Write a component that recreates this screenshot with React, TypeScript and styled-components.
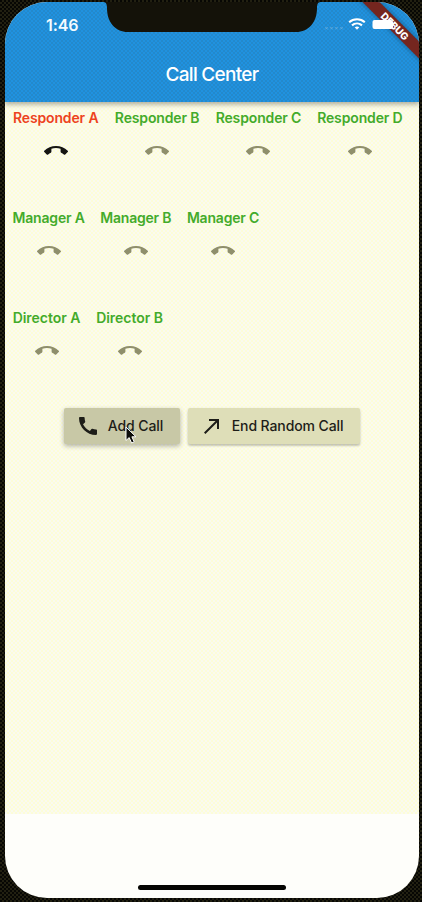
import React from "react";
import styled, { createGlobalStyle } from "styled-components";
import { MdCall, MdCallEnd, MdCallMade } from "react-icons/md";

const GlobalStyle = createGlobalStyle`
  * { box-sizing: border-box; }
  body { margin: 0; background: #141209; font-family: Inter, "Liberation Sans", sans-serif; }
`;

const Device = styled.div`
  width: 422px;
  height: 902px;
  padding: 2px 3px 4px 5px;
  background: repeating-conic-gradient(#222011 0 25%, #070704 0 50%) 0 0 / 4px 4px;
  overflow: hidden;
`;

const Screen = styled.div`
  position: relative;
  display: flex;
  flex-direction: column;
  width: 414px;
  height: 896px;
  border-radius: 42px;
  overflow: hidden;
  background: #fefefa;
`;

const AppBar = styled.header`
  position: relative;
  z-index: 1;
  flex: none;
  height: 100px;
  padding-top: 46px;
  display: flex;
  align-items: center;
  justify-content: center;
  background: repeating-conic-gradient(#2389cc 0 25%, #2092e0 0 50%) 0 0 / 4px 4px;
  box-shadow: 0 2px 4px rgba(0, 0, 0, 0.22), 0 4px 5px rgba(0, 0, 0, 0.1);
`;

const Title = styled.h1`
  margin: 0;
  color: #fff;
  font-size: 19px;
  line-height: 24px;
  font-weight: 500;
  letter-spacing: -0.7px;
`;

const Clock = styled.span`
  position: absolute;
  left: 41px;
  top: 13px;
  color: #f4fbff;
  font-size: 16px;
  line-height: 20px;
  font-weight: 600;
  letter-spacing: -0.1px;
`;

const Notch = styled.svg`
  position: absolute;
  left: 98px;
  top: 0;
`;

const StatusIcons = styled.svg`
  position: absolute;
  z-index: 3;
  left: 314px;
  top: 13px;
`;

const Ribbon = styled.div`
  position: absolute;
  z-index: 2;
  top: 17.5px;
  right: -36px;
  width: 120px;
  height: 12px;
  transform: rotate(45deg);
  background: #75261f;
  color: #fff;
  font-size: 10px;
  line-height: 12px;
  font-weight: 800;
  letter-spacing: -0.1px;
  text-align: center;
  box-shadow: 0 0 5px rgba(0, 0, 0, 0.4);
`;

const Body = styled.main`
  flex: none;
  height: 712px;
  background: repeating-conic-gradient(#fafaf0 0 25%, #fdfdd8 0 50%) 0 0 / 4px 4px;
`;

const Row = styled.section`
  display: flex;
  gap: 16px;
  height: 100px;
  padding: 8px 8px 0;
`;

const Person = styled.div<{ $width: number }>`
  flex: none;
  width: ${(p) => p.$width}px;
  display: flex;
  flex-direction: column;
  align-items: center;
`;

const Name = styled.span<{ $busy: boolean; $tracking: number }>`
  color: ${(p) => (p.$busy ? "#ed4320" : "#43ab2b")};
  font-size: 14px;
  line-height: 16px;
  font-weight: 600;
  letter-spacing: ${(p) => p.$tracking}px;
  white-space: nowrap;
`;

const CallState = styled.span<{ $busy: boolean }>`
  display: flex;
  margin-top: 13px;
  font-size: 24px;
  color: ${(p) => (p.$busy ? "#151511" : "#8f8f6c")};
`;

const Actions = styled.div`
  display: flex;
  justify-content: center;
  gap: 7.5px;
  padding: 6px 0 0;
`;

const ActionButton = styled.button<{ $width: number; $pressed?: boolean }>`
  position: relative;
  width: ${(p) => p.$width}px;
  height: 36px;
  padding: 0 0 0 12px;
  display: flex;
  align-items: center;
  gap: 8px;
  border: 0;
  border-radius: 2px;
  background: ${(p) => (p.$pressed ? "#c8c8a6" : "#dedeb8")};
  color: #1d1d18;
  font-family: inherit;
  font-size: 14px;
  line-height: 16px;
  font-weight: 500;
  letter-spacing: -0.1px;
  white-space: nowrap;
  box-shadow: ${(p) =>
    p.$pressed
      ? "0 2px 5px rgba(0, 0, 0, 0.3)"
      : "0 2px 2px rgba(0, 0, 0, 0.15), 0 1px 3px rgba(0, 0, 0, 0.12)"};

  > svg:first-child { flex: none; font-size: 24px; }
`;

const Pointer = styled.svg`
  position: absolute;
  left: 61.5px;
  top: 18px;
`;

const HomeBar = styled.div`
  align-self: center;
  width: 148px;
  height: 5px;
  margin-top: 71px;
  border-radius: 3px;
  background: #050502;
`;

const groups = [
  { role: "Responder", letters: ["A", "B", "C", "D"], width: 85.4, tracking: -0.14 },
  { role: "Manager", letters: ["A", "B", "C"], width: 71.2, tracking: -0.2 },
  { role: "Director", letters: ["A", "B"], width: 67, tracking: -0.04 },
];

export default function App() {
  return (
    <>
      <GlobalStyle />
      <Device>
        <Screen>
          <AppBar>
            <Clock>1:46</Clock>
            <Title>Call Center</Title>
            <Notch width="218" height="30" viewBox="0 0 218 30">
              <path d="M0 0C3 0 4 2 4 6C4 20 12 30 25 30H193C206 30 214 20 214 6C214 2 215 0 218 0Z" fill="#141209" />
            </Notch>
          </AppBar>
          <Ribbon>DEBUG</Ribbon>
          <StatusIcons width="80" height="18" viewBox="0 0 80 18">
            <path
              d="M6.3 12l2.4 2.4m0-2.4l-2.4 2.4M11.3 12l2.4 2.4m0-2.4l-2.4 2.4M16.3 12l2.4 2.4m0-2.4l-2.4 2.4M21.3 12l2.4 2.4m0-2.4l-2.4 2.4"
              stroke="#67addc"
              strokeWidth="0.8"
            />
            <g fill="none" stroke="#fff" strokeWidth="2.1">
              <path d="M30.2 7.2C34.5 3.2 41.5 3.2 45.8 7.2" />
              <path d="M33 10.4C35.9 7.8 40.1 7.8 43 10.4" />
            </g>
            <path d="M35.7 12.3Q38 10.5 40.3 12.3L38 14.8Z" fill="#fff" />
            <rect x="53.5" y="5" width="20.5" height="9" rx="2" fill="#fff" />
          </StatusIcons>
          <Body>
            {groups.map((group) => (
              <Row key={group.role}>
                {group.letters.map((letter) => {
                  const busy = group.role === "Responder" && letter === "A";
                  return (
                    <Person key={letter} $width={group.width}>
                      <Name $busy={busy} $tracking={group.tracking}>
                        {group.role} {letter}
                      </Name>
                      <CallState $busy={busy}>
                        <MdCallEnd />
                      </CallState>
                    </Person>
                  );
                })}
              </Row>
            ))}
            <Actions>
              <ActionButton $width={116.5} $pressed>
                <MdCall />
                Add Call
                <Pointer width="13" height="19" viewBox="0 0 13 19">
                  <path d="M1 1V14.5L4.2 11.6L6.6 17L9.2 15.9L6.9 10.8H11Z" fill="#0c0c09" stroke="#fff" strokeWidth="1" />
                </Pointer>
              </ActionButton>
              <ActionButton $width={172.5}>
                <MdCallMade />
                End Random Call
              </ActionButton>
            </Actions>
          </Body>
          <HomeBar />
        </Screen>
      </Device>
    </>
  );
}
